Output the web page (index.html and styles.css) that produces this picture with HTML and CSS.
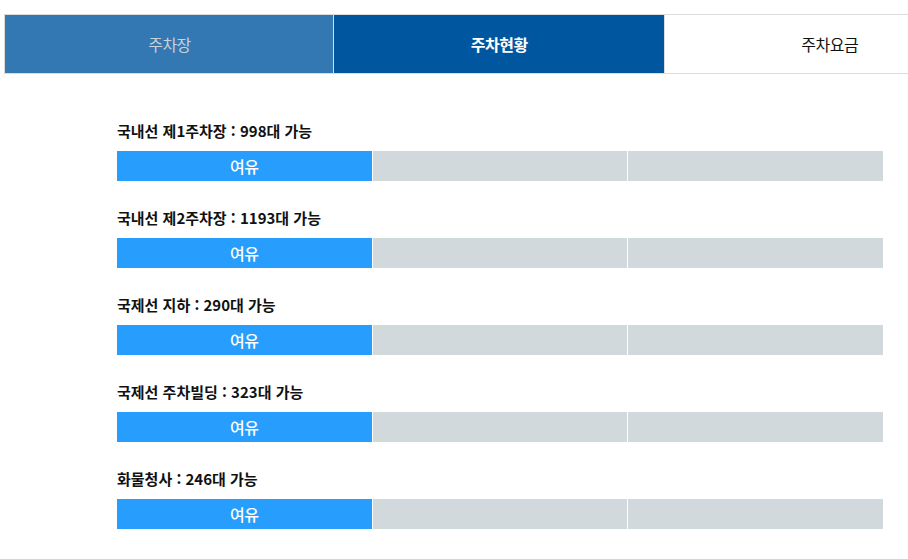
FILE: index.html
```html
<!DOCTYPE html>
<html lang="ko">
<head>
<meta charset="utf-8">
<link rel="stylesheet" href="styles.css">
</head>
<body>
<div class="page">
  <nav class="tabs">
    <div class="tab tab-lot">주차장</div>
    <div class="tab tab-active">주차현황</div>
    <div class="tab tab-fee">주차요금</div>
  </nav>
  <main class="status">
    <section class="row">
      <div class="label">국내선 제1주차장 : 998대 가능</div>
      <div class="bar"><div class="seg seg-on">여유</div><div class="seg"></div><div class="seg"></div></div>
    </section>
    <section class="row">
      <div class="label">국내선 제2주차장 : 1193대 가능</div>
      <div class="bar"><div class="seg seg-on">여유</div><div class="seg"></div><div class="seg"></div></div>
    </section>
    <section class="row">
      <div class="label">국제선 지하 : 290대 가능</div>
      <div class="bar"><div class="seg seg-on">여유</div><div class="seg"></div><div class="seg"></div></div>
    </section>
    <section class="row">
      <div class="label">국제선 주차빌딩 : 323대 가능</div>
      <div class="bar"><div class="seg seg-on">여유</div><div class="seg"></div><div class="seg"></div></div>
    </section>
    <section class="row">
      <div class="label">화물청사 : 246대 가능</div>
      <div class="bar"><div class="seg seg-on">여유</div><div class="seg"></div><div class="seg"></div></div>
    </section>
  </main>
</div>
</body>
</html>
```
FILE: styles.css
```css
html, body {
  margin: 0;
  padding: 0;
  background: #fff;
  overflow: hidden;
}
body {
  font-family: "Noto Sans CJK KR", "Noto Sans", sans-serif;
  color: #111;
}
.page {
  width: 908px;
  overflow: hidden;
  padding-top: 14px;
}
.tabs {
  display: flex;
  margin-left: 4px;
  width: 1000px;
}
.tab {
  width: 330.5px;
  flex: none;
  height: 58px;
  box-sizing: content-box;
  border-top: 1px solid #dcdcdc;
  border-bottom: 1px solid #dcdcdc;
  border-left: 1px solid #dcdcdc;
  display: flex;
  align-items: center;
  justify-content: center;
  font-size: 16px;
  letter-spacing: -0.5px;
  margin-left: -1px;
}
.tab-lot {
  margin-left: 0;
  width: 329px;
  background: #3378b3;
  color: #c9d2da;
}
.tab-active {
  background: #00579f;
  color: #fff;
  font-weight: 700;
}
.tab-fee {
  background: #fff;
  color: #111;
}
.status {
  padding: 47px 0 0 117px;
  width: 766px;
}
.row {
  margin-bottom: 27px;
}
.label {
  font-size: 15px;
  font-weight: 700;
  line-height: 20px;
  letter-spacing: 0;
  margin-bottom: 10px;
  color: #111;
}
.bar {
  display: grid;
  grid-template-columns: 1fr 1fr 1fr;
  column-gap: 1px;
  height: 30px;
}
.seg {
  background: #d2d9dc;
}
.seg-on {
  background: #279efd;
  color: #fff;
  font-size: 16px;
  font-weight: 500;
  display: flex;
  align-items: center;
  justify-content: center;
  letter-spacing: -0.3px;
}
```
